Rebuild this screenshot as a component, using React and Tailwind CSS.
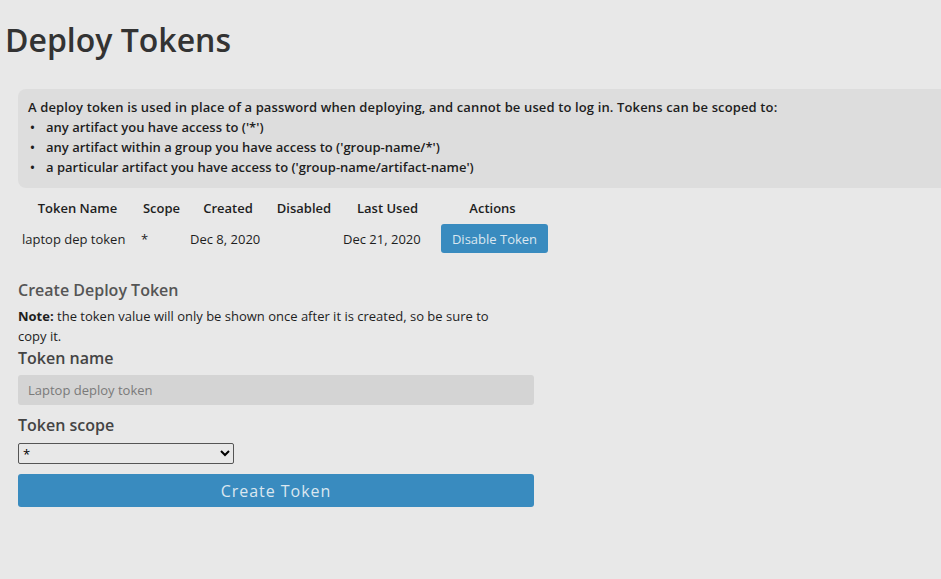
import React, { useState } from "react";

function App()
{
        const [name, setName] = useState("");
        const [scope, setScope] = useState("*");

        const tokens = [
                { name: "laptop dep token", scope: "*", created: "Dec 8, 2020", disabled: "", lastUsed: "Dec 21, 2020" },
        ];

        return (
                <div className="min-h-screen bg-[#e8e8e8] font-['Open_Sans','Lato',sans-serif] text-[#1e1e1e] overflow-hidden">
                        <h1 className="pl-[5px] pt-[20px] text-[32px] leading-[40px] font-semibold text-[#333]">
                                Deploy Tokens
                        </h1>

                        <div className="ml-[18px] mt-[29px] rounded-l-[8px] bg-[#dddddd] pl-[10px] pt-[8px] pb-[11px] text-[13px] leading-5 font-semibold">
                                <p className="tracking-[0.01em]">A deploy token is used in place of a password when deploying, and cannot be used to log in. Tokens can be scoped to:</p>
                                <ul>
                                        <li className="flex"><span className="w-[18px] pl-[2px]">•</span>any artifact you have access to ('*')</li>
                                        <li className="flex"><span className="w-[18px] pl-[2px]">•</span>any artifact within a group you have access to ('group-name/*')</li>
                                        <li className="flex"><span className="w-[18px] pl-[2px]">•</span>a particular artifact you have access to ('group-name/artifact-name')</li>
                                </ul>
                        </div>

                        <table className="ml-[18px] mt-[6px] table-fixed text-[13px] leading-5">
                                <thead>
                                        <tr>
                                                <th className="w-[119px] py-1 font-semibold text-center">Token Name</th>
                                                <th className="w-[49px] py-1 font-semibold text-center">Scope</th>
                                                <th className="w-[84px] py-1 font-semibold text-center">Created</th>
                                                <th className="w-[68px] py-1 font-semibold text-center">Disabled</th>
                                                <th className="w-[99px] py-1 font-semibold text-center">Last Used</th>
                                                <th className="w-[111px] py-1 font-semibold text-center">Actions</th>
                                        </tr>
                                </thead>
                                <tbody>
                                        {tokens.map((t) => (
                                                <tr key={t.name} className="h-[33px]">
                                                        <td className="pl-1 whitespace-nowrap">{t.name}</td>
                                                        <td className="pl-1">{t.scope}</td>
                                                        <td className="pl-1 whitespace-nowrap">{t.created}</td>
                                                        <td className="pl-1">{t.disabled}</td>
                                                        <td className="pl-[5px] whitespace-nowrap">{t.lastUsed}</td>
                                                        <td className="pl-1">
                                                                <button className="h-[29px] w-[107px] rounded-[3px] bg-[#398bbf] text-[13px] text-[#dbe7f0] whitespace-nowrap">
                                                                        Disable Token
                                                                </button>
                                                        </td>
                                                </tr>
                                        ))}
                                </tbody>
                        </table>

                        <div className="ml-[18px] mt-[23px] w-[516px] flex flex-col">
                                <span className="text-[16px] leading-6 font-semibold text-[#555]">
                                        Create Deploy Token
                                </span>

                                <p className="mt-[4px] text-[13px] leading-5 pr-6">
                                        <span className="font-bold">Note:</span> the token value will only be shown once after it is created, so be sure to copy it.
                                </p>

                                <label className="text-[16px] leading-6 font-semibold text-[#444]">
                                        Token name
                                </label>

                                <input
                                        type="text"
                                        value={name}
                                        placeholder="Laptop deploy token"
                                        className="mt-[5px] h-[30px] w-full rounded-[3px] bg-[#d4d4d4] px-[10px] text-[13px] text-[#333] placeholder:text-[#7a7a7a] outline-none"
                                        onChange={(e) => {setName(e.target.value)}}
                                />

                                <label className="mt-[8px] text-[16px] leading-6 font-semibold text-[#444]">
                                        Token scope
                                </label>

                                <select
                                        value={scope}
                                        className="mt-[6px] h-[21px] w-[216px] rounded-[2px] border border-[#555] bg-[#e8e8e8] text-[13px] text-black"
                                        onChange={(e) => {setScope(e.target.value)}}
                                >
                                        <option value="*">*</option>
                                </select>

                                <button className="mt-[10px] h-[33px] w-full rounded-[3px] bg-[#398bbf] text-[16px] tracking-[0.06em] text-[#dbe7f0]">
                                        Create Token
                                </button>
                        </div>
                </div>
        );
}

export default App;
